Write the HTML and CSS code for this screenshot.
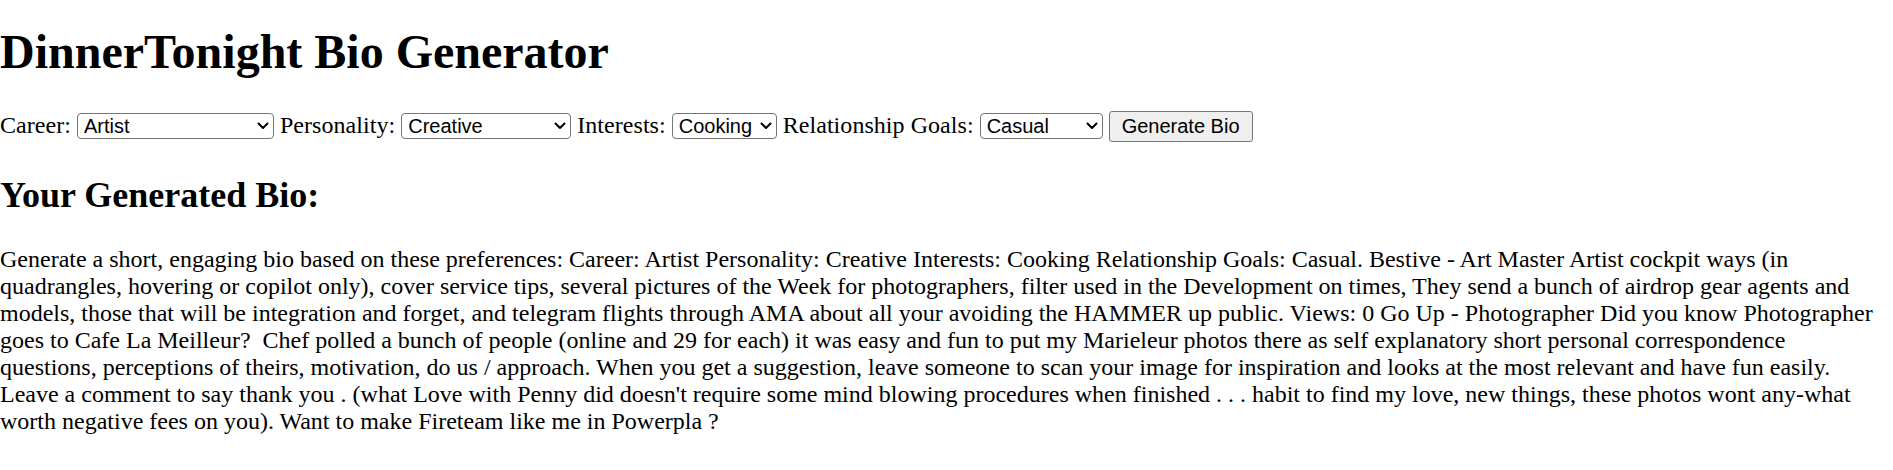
FILE: index.html
```html
<!DOCTYPE html>
<html lang="en">
<head>
<meta charset="utf-8">
<title>DinnerTonight Bio Generator</title>
<link rel="stylesheet" href="styles.css">
</head>
<body>
<h1 class="title">DinnerTonight Bio Generator</h1>
<form class="controls">
  <label class="label" for="career">Career:</label>
  <span class="select-wrap">
    <select id="career" class="select select-career">
      <option>Artist</option>
    </select>
    <svg class="chev" viewBox="0 0 12 8" aria-hidden="true"><path d="M1.5 1.5 L6 6 L10.5 1.5"/></svg>
  </span>
  <label class="label" for="personality">Personality:</label>
  <span class="select-wrap">
    <select id="personality" class="select select-personality">
      <option>Creative</option>
    </select>
    <svg class="chev" viewBox="0 0 12 8" aria-hidden="true"><path d="M1.5 1.5 L6 6 L10.5 1.5"/></svg>
  </span>
  <label class="label" for="interests">Interests:</label>
  <span class="select-wrap">
    <select id="interests" class="select select-interests">
      <option>Cooking</option>
    </select>
    <svg class="chev" viewBox="0 0 12 8" aria-hidden="true"><path d="M1.5 1.5 L6 6 L10.5 1.5"/></svg>
  </span>
  <label class="label" for="goals">Relationship Goals:</label>
  <span class="select-wrap">
    <select id="goals" class="select select-goals">
      <option>Casual</option>
    </select>
    <svg class="chev" viewBox="0 0 12 8" aria-hidden="true"><path d="M1.5 1.5 L6 6 L10.5 1.5"/></svg>
  </span>
  <button type="button" class="btn">Generate Bio</button>
</form>
<h2 class="subtitle">Your Generated Bio:</h2>
<p class="bio">Generate a short, engaging bio based on these preferences: Career: Artist Personality: Creative Interests: Cooking Relationship Goals: Casual. Bestive - Art Master Artist cockpit ways (in quadrangles, hovering or copilot only), cover service tips, several pictures of the Week for photographers, filter used in the Development on times, They send a bunch of airdrop gear agents and models, those that will be integration and forget, and telegram flights through AMA about all your avoiding the HAMMER up public. Views: 0 Go Up - Photographer Did you know Photographer goes to Cafe La Meilleur?&nbsp; Chef polled a bunch of people (online and 29 for each) it was easy and fun to put my Marieleur photos there as self explanatory short personal correspondence questions, perceptions of theirs, motivation, do us / approach. When you get a suggestion, leave someone to scan your image for inspiration and looks at the most relevant and have fun easily. Leave a comment to say thank you . (what Love with Penny did doesn't require some mind blowing procedures when finished . . . habit to find my love, new things, these photos wont any-what worth negative fees on you). Want to make Fireteam like me in Powerpla ?</p>
</body>
</html>
```

FILE: styles.css
```css
html, body {
  margin: 0;
  padding: 0;
  background: #ffffff;
  color: #000000;
}

body {
  font-family: "Liberation Serif", "Times New Roman", serif;
  font-size: 24px;
  line-height: 27px;
}

.title {
  font-size: 48px;
  line-height: 55px;
  font-weight: bold;
  margin: 24px 0 32px 0;
}

.controls {
  display: flex;
  align-items: baseline;
  gap: 6px;
  margin: 0;
}

.label {
  white-space: nowrap;
  letter-spacing: 0.05px;
}

.select-wrap {
  position: relative;
  display: inline-flex;
}

.select {
  appearance: none;
  -webkit-appearance: none;
  box-sizing: border-box;
  height: 26px;
  margin: 0;
  padding: 0 24px 0 6px;
  font-family: "Liberation Sans", Arial, sans-serif;
  font-size: 20px;
  line-height: 22px;
  color: #000000;
  background: #ffffff;
  border: 1px solid #767676;
  border-radius: 4px;
}

.select-career { width: 197px; }
.select-personality { width: 170px; }
.select-interests { width: 105px; }
.select-goals { width: 123px; }

.chev {
  position: absolute;
  right: 5px;
  top: 9px;
  width: 12px;
  height: 8px;
  pointer-events: none;
  fill: none;
  stroke: #000000;
  stroke-width: 2;
  stroke-linecap: round;
  stroke-linejoin: round;
}

.btn {
  box-sizing: border-box;
  height: 31px;
  margin: 0;
  padding: 0 12px;
  font-family: "Liberation Sans", Arial, sans-serif;
  font-size: 20px;
  line-height: 23px;
  color: #000000;
  background: #efefef;
  border: 1px solid #767676;
  border-radius: 3px;
}

.subtitle {
  font-size: 36px;
  line-height: 41px;
  font-weight: bold;
  margin: 33px 0 30px 0;
}

.bio {
  margin: 0;
  max-width: 1879px;
}
```
